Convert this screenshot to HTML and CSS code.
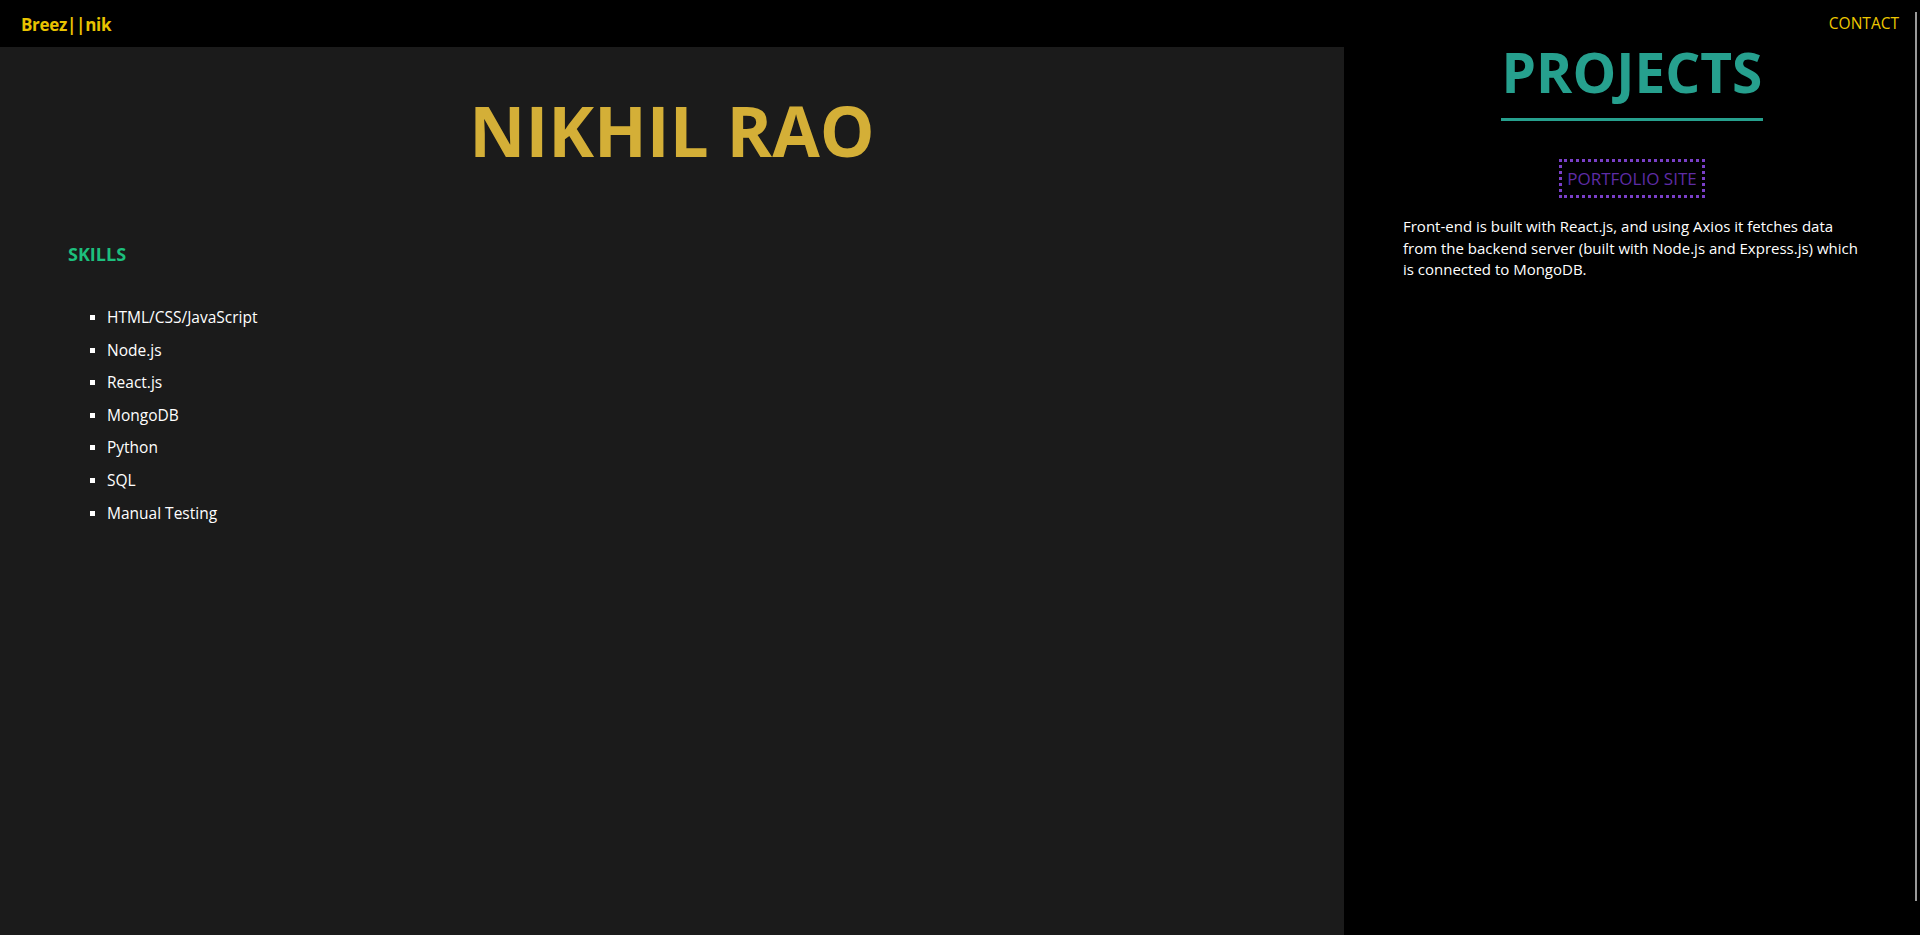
FILE: index.html
```html
<!DOCTYPE html>
<html lang="en">
<head>
<meta charset="utf-8">
<title>Nikhil Rao</title>
<link rel="stylesheet" href="styles.css">
</head>
<body>
<header class="topbar">
  <a class="brand" href="#">Breez||nik</a>
  <a class="contact" href="#">CONTACT</a>
</header>
<main class="layout">
  <section class="about">
    <h1 class="name">NIKHIL RAO</h1>
    <h3 class="skills-title">SKILLS</h3>
    <ul class="skills">
      <li>HTML/CSS/JavaScript</li>
      <li>Node.js</li>
      <li>React.js</li>
      <li>MongoDB</li>
      <li>Python</li>
      <li>SQL</li>
      <li>Manual Testing</li>
    </ul>
  </section>
  <section class="projects">
    <h2 class="projects-title">PROJECTS</h2>
    <div class="project">
      <a class="project-link" href="#">PORTFOLIO SITE</a>
      <p class="project-desc">Front-end is built with React.js, and using Axios it fetches data from the backend server (built with Node.js and Express.js) which is connected to MongoDB.</p>
    </div>
  </section>
</main>
<div class="scroll-thumb"></div>
</body>
</html>
```
FILE: styles.css
```css
html, body {
  margin: 0;
  padding: 0;
  height: 100%;
  background: #000;
  overflow: hidden;
}
body {
  font-family: "Open Sans", "Noto Sans", sans-serif;
  color: #fff;
}
.topbar {
  height: 47px;
  background: #000;
  display: flex;
  align-items: center;
  justify-content: space-between;
  padding: 0 21px 0 21px;
  box-sizing: border-box;
}
.brand {
  color: #e8c300;
  font-weight: 700;
  font-size: 17px;
  letter-spacing: -0.3px;
  text-decoration: none;
  margin-top: 2px;
}
.contact {
  color: #eec800;
  font-size: 15.5px;
  text-decoration: none;
  margin-top: -1px;
}
.layout {
  display: flex;
  height: calc(100% - 47px);
}
.about {
  width: 1344px;
  background: #1b1b1b;
  padding: 0 68px;
  box-sizing: border-box;
}
.name {
  margin: 38px 0 0;
  text-align: center;
  color: #d4af37;
  font-size: 69px;
  font-weight: 700;
  line-height: 90px;
}
.skills-title {
  margin: 67px 0 0;
  color: #1dbf7d;
  font-size: 18px;
  font-weight: 700;
  line-height: 24px;
}
.skills {
  list-style: square;
  margin: 41px 0 0;
  padding-left: 39px;
}
.skills li {
  font-size: 15.5px;
  line-height: 20px;
  margin-bottom: 12.6px;
}
.skills li::marker {
  font-size: 14px;
}
.projects {
  flex: 1;
  background: #000;
  text-align: center;
  padding: 0 59px;
}
.projects-title {
  display: inline-block;
  margin: 0;
  padding: 0 1px 21px;
  color: #26a08e;
  font-size: 55px;
  font-weight: 700;
  line-height: 50px;
  border-bottom: 3px solid #26a08e;
}
.project {
  margin-top: 38px;
  display: flex;
  flex-direction: column;
  align-items: center;
}
.project-link {
  color: #5e2ca5;
  font-size: 17px;
  line-height: 33px;
  padding: 0 5px;
  border: 3px dotted #7a3fc8;
  text-decoration: none;
}
.project-desc {
  align-self: stretch;
  text-align: left;
  margin: 18px -4px 0 0;
  font-size: 15px;
  line-height: 21.5px;
}
.scroll-thumb {
  position: fixed;
  top: 12px;
  left: 1915px;
  width: 2px;
  height: 889px;
  background: #9a9a9a;
}
```
